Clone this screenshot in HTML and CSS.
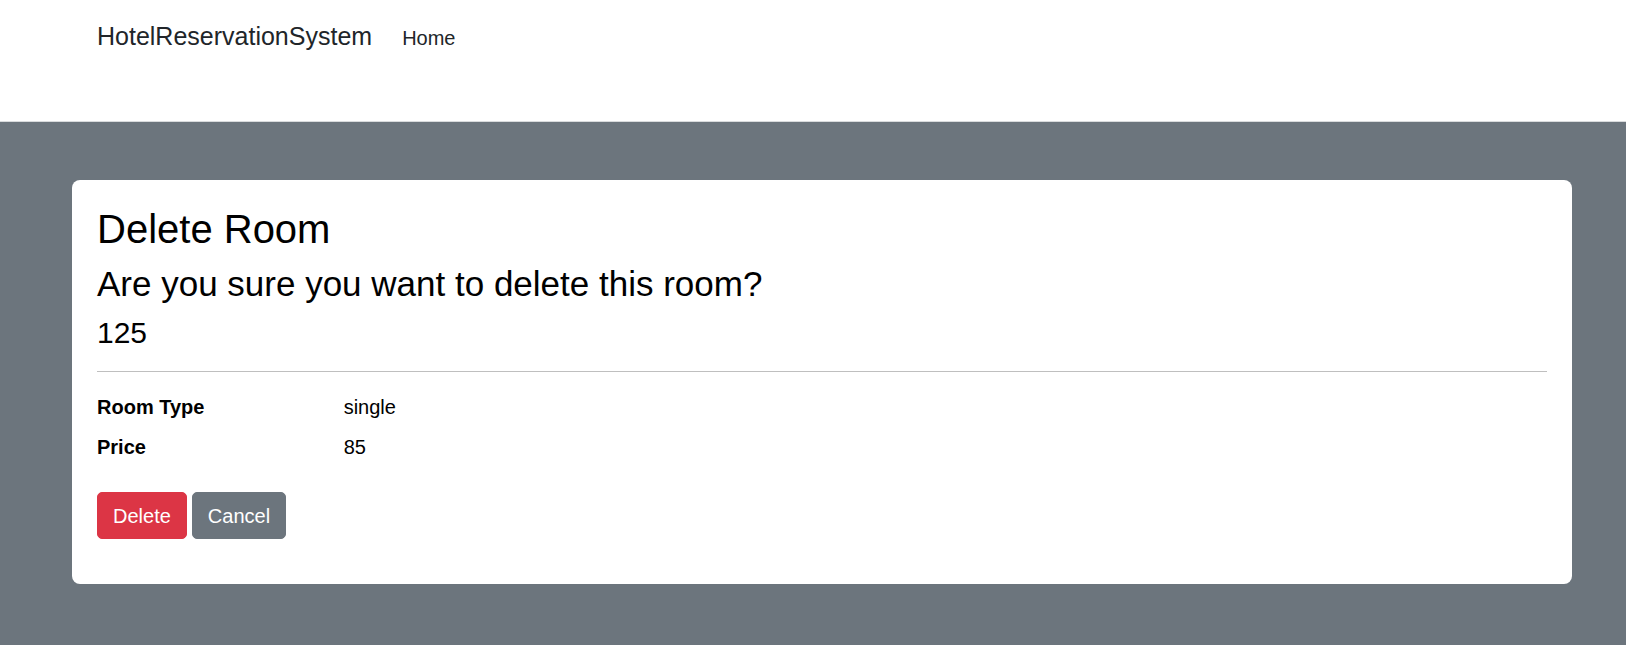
FILE: index.html
```html
<!DOCTYPE html>
<html lang="en">
<head>
<meta charset="utf-8">
<title>Delete Room - HotelReservationSystem</title>
<link rel="stylesheet" href="styles.css">
</head>
<body>
<header class="navbar">
  <a class="brand" href="#">HotelReservationSystem</a>
  <nav class="nav">
    <a class="nav-link" href="#">Home</a>
  </nav>
</header>
<main class="main">
  <section class="card">
    <h2 class="title">Delete Room</h2>
    <h3 class="question">Are you sure you want to delete this room?</h3>
    <h4 class="room-number">125</h4>
    <hr class="divider">
    <dl class="details">
      <dt>Room Type</dt>
      <dd>single</dd>
      <dt>Price</dt>
      <dd>85</dd>
    </dl>
    <form class="actions">
      <button type="button" class="btn btn-danger">Delete</button>
      <button type="button" class="btn btn-secondary">Cancel</button>
    </form>
  </section>
</main>
</body>
</html>
```

FILE: styles.css
```css
* {
  box-sizing: border-box;
}

html,
body {
  margin: 0;
  height: 100%;
}

body {
  font-family: "Liberation Sans", Arial, sans-serif;
  font-size: 20px;
  line-height: 1.5;
  color: #000;
  background: #6c757d;
  display: flex;
  flex-direction: column;
}

.navbar {
  background: #fff;
  height: 122px;
  border-bottom: 1px solid #d9dbdd;
  display: flex;
  align-items: baseline;
  padding: 21px 0 0 97px;
  flex-shrink: 0;
}

.brand {
  font-size: 25px;
  line-height: 30px;
  color: #212529;
  text-decoration: none;
  margin-right: 30px;
}

.nav {
  display: flex;
}

.nav-link {
  font-size: 20px;
  line-height: 30px;
  color: #212529;
  text-decoration: none;
}

.main {
  flex: 1;
  padding: 58px 54px 0 72px;
}

.card {
  background: #fff;
  border-radius: 8px;
  padding: 25px;
}

.title {
  margin: 0 0 10px;
  font-size: 40px;
  font-weight: 400;
  line-height: 48px;
}

.question {
  margin: 0 0 10px;
  font-size: 35px;
  font-weight: 400;
  line-height: 42px;
}

.room-number {
  margin: 0;
  font-size: 30px;
  font-weight: 400;
  line-height: 36px;
}

.divider {
  margin: 20px 0;
  border: 0;
  border-top: 1px solid #bfbfbf;
}

.details {
  margin: 0 0 20px;
  display: grid;
  grid-template-columns: calc((100% + 30px) / 6 - 30px) 1fr;
  column-gap: 30px;
}

.details dt {
  font-weight: 700;
  margin: 0 0 10px;
}

.details dd {
  margin: 0 0 10px;
}

.actions {
  margin: 0 0 20px;
  display: flex;
  gap: 5px;
}

.btn {
  font-family: inherit;
  font-size: 20px;
  line-height: 30px;
  padding: 7.5px 15px;
  border: 1px solid transparent;
  border-radius: 5px;
  color: #fff;
  cursor: pointer;
}

.btn-danger {
  background: #dc3545;
  border-color: #dc3545;
}

.btn-secondary {
  background: #6c757d;
  border-color: #6c757d;
}
```
